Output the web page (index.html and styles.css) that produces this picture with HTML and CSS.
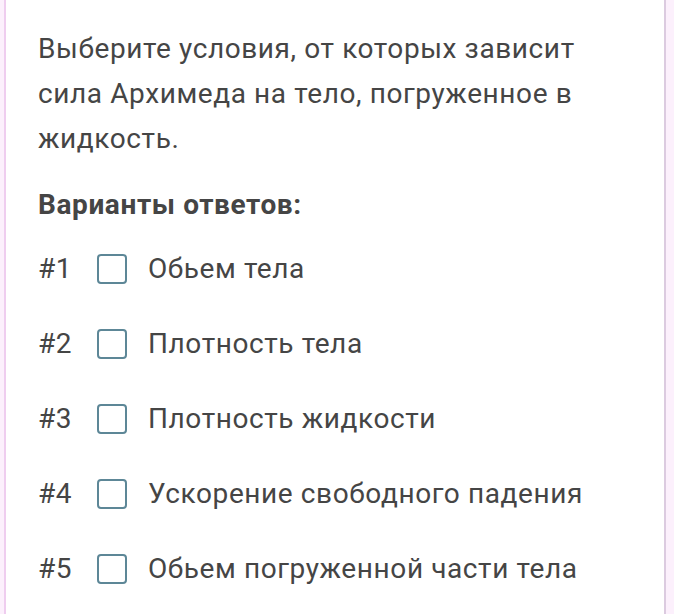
FILE: index.html
```html
<!DOCTYPE html>
<html lang="ru">
<head>
<meta charset="utf-8">
<link rel="stylesheet" href="styles.css">
</head>
<body>
<div class="card">
  <p class="question">Выберите условия, от которых зависит сила Архимеда на тело, погруженное в жидкость.</p>
  <h3 class="heading">Варианты ответов:</h3>
  <ul class="options">
    <li class="option"><span class="num">#1</span><span class="box"></span><span class="label">Обьем тела</span></li>
    <li class="option"><span class="num">#2</span><span class="box"></span><span class="label">Плотность тела</span></li>
    <li class="option"><span class="num">#3</span><span class="box"></span><span class="label">Плотность жидкости</span></li>
    <li class="option"><span class="num">#4</span><span class="box"></span><span class="label">Ускорение свободного падения</span></li>
    <li class="option"><span class="num">#5</span><span class="box"></span><span class="label">Обьем погруженной части тела</span></li>
  </ul>
</div>
</body>
</html>
```

FILE: styles.css
```css
html, body {
  margin: 0;
  padding: 0;
  background: #fcf0fc;
  height: 100%;
  overflow: hidden;
}
body {
  font-family: Roboto, "Noto Sans", sans-serif;
  color: #454545;
  letter-spacing: 0.6px;
}
.card {
  margin: 0 8px 0 4px;
  min-height: 614px;
  background: #ffffff;
  border-left: 2px solid #efcdef;
  border-right: 2px solid #dccbe0;
  padding: 26px 20px 0 32px;
  box-sizing: border-box;
}
.question {
  margin: 0;
  font-size: 28px;
  line-height: 45px;
  max-width: 580px;
}
.heading {
  margin: 22px 0 0;
  font-size: 28px;
  line-height: 44px;
  font-weight: 700;
}
.options {
  list-style: none;
  margin: 4px 0 0;
  padding: 0;
}
.option {
  display: flex;
  align-items: center;
  height: 75px;
  font-size: 28px;
}
.num {
  width: 59px;
}
.box {
  width: 30px;
  height: 30px;
  box-sizing: border-box;
  border: 2px solid #5d8797;
  border-radius: 4px;
  margin-right: 21px;
}
```
